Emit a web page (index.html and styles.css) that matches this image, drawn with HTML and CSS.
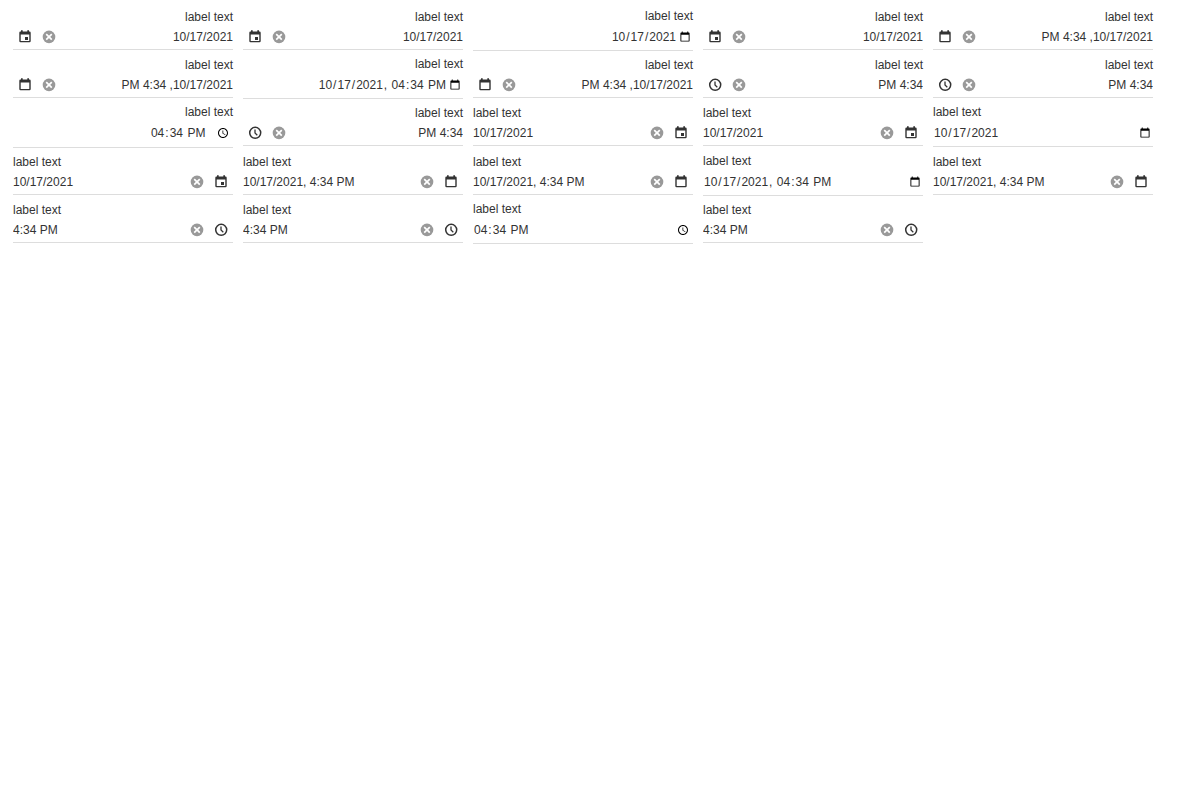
FILE: index.html
```
<!DOCTYPE html>
<html lang="en">
<head>
<meta charset="utf-8">
<title>Date boxes</title>
<link rel="stylesheet" href="styles.css">
</head>
<body>
<svg class="sprite" aria-hidden="true">
  <symbol id="event" viewBox="0 0 14 14"><path fill-rule="evenodd" d="M3 .3h1.700V1.500h4.600V.3H11V1.500h.5q1.200 0 1.200 1.200v8.400q0 1.200-1.200 1.200h-9q-1.200 0-1.200-1.200V2.700q0-1.200 1.200-1.200H3zM2.700 4.500v6.400h8.600V4.500zM7 7h3v3H7z"/></symbol>
  <symbol id="calendar" viewBox="0 0 14 14"><path fill-rule="evenodd" d="M3 .3h1.700V1.500h4.600V.3H11V1.500h.5q1.200 0 1.200 1.200v8.400q0 1.200-1.200 1.200h-9q-1.200 0-1.200-1.200V2.700q0-1.200 1.200-1.200H3zM2.700 4.500v6.400h8.600V4.500z"/></symbol>
  <symbol id="clock" viewBox="0 0 14 14"><g fill="none" stroke="currentColor"><circle cx="7.200" cy="6.800" r="5.500" stroke-width="1.500"/><path d="M7 3.500V7L9.300 9.200" stroke-width="1.300"/></g></symbol>
  <symbol id="clear" viewBox="0 0 14 14"><circle cx="7" cy="6.900" r="6.300"/><path d="M4.200 4.100l5.600 5.600M9.800 4.100L4.200 9.700" stroke="#fff" stroke-width="1.700"/></symbol>
</svg>
<main class="grid" id="grid"></main>
<script src="app.js"></script>
</body>
</html>
```
FILE: styles.css
```
body {
  margin: 0;
  background: #fff;
  color: #333;
  font: 12px/16px "Liberation Sans", Arial, sans-serif;
}
.sprite { display: none; }
.grid {
  display: grid;
  grid-template-columns: repeat(auto-fill, 220px);
  align-items: start;
  gap: 5px 10px;
  padding: 8px 13px;
}
.field { display: flex; flex-direction: column; }
.custom { padding-top: 1px; }
.box {
  display: flex;
  align-items: center;
  height: 24px;
  border-bottom: 1px solid #ddd;
}
.native .box { height: 26px; }
.native.tall .box { padding-bottom: 1px; }
.input {
  flex: 1;
  min-width: 0;
  height: 100%;
  box-sizing: border-box;
  margin: 0;
  padding: 0;
  border: 0;
  outline: 0;
  background: none;
  color: inherit;
  font: inherit;
}
.native[dir="rtl"] .input { text-align: right; }
.native[dir="rtl"] .input::-webkit-datetime-edit { text-align: right; }
.native[dir="rtl"] .input:not([type="time"])::-webkit-calendar-picker-indicator { margin-inline: 0; }
.button {
  display: flex;
  align-items: center;
  justify-content: center;
  width: 24px;
  height: 24px;
  padding: 0;
  border: 0;
  background: none;
  color: #333;
}
.clear { color: #999; }
.icon { width: 14px; height: 14px; fill: currentColor; }
```
FILE: app.js
```
const date = "10/17/2021", dateTime = "10/17/2021, 4:34 PM", time = "4:34 PM";
const fields = [
  ["event", date], ["event", date], ["date", "2021-10-17"], ["event", date],
  ["calendar", dateTime], ["calendar", dateTime], ["datetime-local", "2021-10-17T16:34"], ["calendar", dateTime],
  ["clock", time], ["clock", time], ["time", "16:34"], ["clock", time]
];
const icon = name => `<svg class="icon" aria-hidden="true"><use href="#${name}"/></svg>`;
const render = (dir, [kind, value], i) => {
  const id = `${dir}-${i}`;
  const custom = ["event", "calendar", "clock"].includes(kind);
  const tall = dir === "rtl" && kind === "time" ? " tall" : "";
  const buttons = custom
    ? `<button class="button clear" type="button" aria-label="Clear">${icon("clear")}</button><button class="button" type="button" aria-label="Open">${icon(kind)}</button>`
    : "";
  return `<div class="field ${custom ? "custom" : "native" + tall}" dir="${dir}">
    <label for="${id}">label text</label>
    <div class="box"><input class="input" id="${id}" type="${custom ? "text" : kind}" value="${value}">${buttons}</div>
  </div>`;
};
document.getElementById("grid").innerHTML =
  ["rtl", "ltr"].map(dir => fields.map((f, i) => render(dir, f, i)).join("")).join("");
```
